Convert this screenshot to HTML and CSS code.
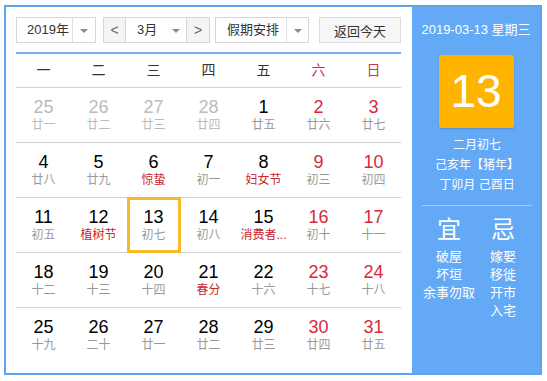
FILE: index.html
```html
<!DOCTYPE html>
<html lang="zh-CN">
<head>
    <meta charset="utf-8">
    <link rel="stylesheet" href="styles.css">
    <title>万年历</title>
</head>
<body>
<div class="calendar">
    <main class="main">
        <div class="toolbar">
            <div class="select sel-year">
                <span class="sel-text">2019年</span>
                <span class="sel-arrow"></span>
            </div>
            <div class="nav">
                <button class="nav-btn">&lt;</button>
                <div class="sel-month">
                    <span class="sel-text">3月</span>
                    <span class="sel-arrow"></span>
                </div>
                <button class="nav-btn nav-next">&gt;</button>
            </div>
            <div class="select sel-holiday">
                <span class="sel-text">假期安排</span>
                <span class="sel-arrow"></span>
            </div>
            <button class="btn-today">返回今天</button>
        </div>

        <div class="weekdays">
            <span>一</span><span>二</span><span>三</span><span>四</span><span>五</span>
            <span class="red">六</span><span class="red">日</span>
        </div>

        <div class="week">
            <div class="day other"><b>25</b><i>廿一</i></div>
            <div class="day other"><b>26</b><i>廿二</i></div>
            <div class="day other"><b>27</b><i>廿三</i></div>
            <div class="day other"><b>28</b><i>廿四</i></div>
            <div class="day"><b>1</b><i>廿五</i></div>
            <div class="day weekend"><b>2</b><i>廿六</i></div>
            <div class="day weekend"><b>3</b><i>廿七</i></div>
        </div>
        <div class="week">
            <div class="day"><b>4</b><i>廿八</i></div>
            <div class="day"><b>5</b><i>廿九</i></div>
            <div class="day"><b>6</b><i class="fest">惊蛰</i></div>
            <div class="day"><b>7</b><i>初一</i></div>
            <div class="day"><b>8</b><i class="fest">妇女节</i></div>
            <div class="day weekend"><b>9</b><i>初三</i></div>
            <div class="day weekend"><b>10</b><i>初四</i></div>
        </div>
        <div class="week">
            <div class="day"><b>11</b><i>初五</i></div>
            <div class="day"><b>12</b><i class="fest">植树节</i></div>
            <div class="day today"><b>13</b><i>初七</i></div>
            <div class="day"><b>14</b><i>初八</i></div>
            <div class="day"><b>15</b><i class="fest" title="消费者权益日">消费者...</i></div>
            <div class="day weekend"><b>16</b><i>初十</i></div>
            <div class="day weekend"><b>17</b><i>十一</i></div>
        </div>
        <div class="week">
            <div class="day"><b>18</b><i>十二</i></div>
            <div class="day"><b>19</b><i>十三</i></div>
            <div class="day"><b>20</b><i>十四</i></div>
            <div class="day"><b>21</b><i class="fest">春分</i></div>
            <div class="day"><b>22</b><i>十六</i></div>
            <div class="day weekend"><b>23</b><i>十七</i></div>
            <div class="day weekend"><b>24</b><i>十八</i></div>
        </div>
        <div class="week">
            <div class="day"><b>25</b><i>十九</i></div>
            <div class="day"><b>26</b><i>二十</i></div>
            <div class="day"><b>27</b><i>廿一</i></div>
            <div class="day"><b>28</b><i>廿二</i></div>
            <div class="day"><b>29</b><i>廿三</i></div>
            <div class="day weekend"><b>30</b><i>廿四</i></div>
            <div class="day weekend"><b>31</b><i>廿五</i></div>
        </div>
    </main>

    <aside class="side">
        <div class="side-date">2019-03-13 星期三</div>
        <div class="side-day">13</div>
        <div class="side-lunar">
            <div>二月初七</div>
            <div>己亥年【猪年】</div>
            <div>丁卯月 己酉日</div>
        </div>
        <div class="side-almanac">
            <div class="alm-col">
                <h2>宜</h2>
                <div>破屋</div>
                <div>坏垣</div>
                <div>余事勿取</div>
            </div>
            <div class="alm-col">
                <h2>忌</h2>
                <div>嫁娶</div>
                <div>移徙</div>
                <div>开市</div>
                <div>入宅</div>
            </div>
        </div>
    </aside>
</div>
</body>
</html>
```

FILE: styles.css
```css
/* @formatter:off */
* { box-sizing: border-box; }
html, body { margin: 0; padding: 0; background: #fff; font-family: "Liberation Sans", "Noto Sans CJK SC", sans-serif; }
.calendar { display: flex; width: 538px; height: 370px; margin: 5px 0 0 4px; border: 2px solid #5fa3ea; }

/* left side: toolbar + month grid */
.main { width: 406px; padding: 10px 11px 0 10px; }
.toolbar { display: flex; height: 26px; margin-bottom: 9px; font-size: 13px; color: #333; }
.toolbar button { font-family: inherit; font-size: 13px; color: #333; padding: 0; margin: 0; cursor: pointer; }
.select { display: flex; height: 26px; border: 1px solid #d6d6d6; background: #fff; }
.sel-text { display: flex; align-items: center; padding-left: 10px; line-height: 24px; border-right: 1px solid #e2e2e2; }
.sel-arrow { position: relative; flex: 1; }
.sel-arrow::after { content: ""; position: absolute; left: 50%; top: 11px; margin-left: -4px; border: 4px solid transparent; border-top: 4px solid #8a8a8a; border-bottom: 0; }
.sel-year { width: 80px; }
.sel-year .sel-text { width: 56px; }
.nav { display: flex; width: 107px; height: 26px; margin-left: 7px; border: 1px solid #d6d6d6; }
.nav-btn { width: 22px; height: 24px; border: 0; border-right: 1px solid #d6d6d6; background: #f4f4f4; color: #666 !important; font-size: 14px !important; }
.nav-btn.nav-next { border-right: 0; border-left: 1px solid #d6d6d6; width: 23px; }
.sel-month { display: flex; flex: 1; background: #fff; }
.sel-month .sel-text { width: 40px; padding-left: 11px; border-right: 0; }
.sel-holiday { width: 94px; margin-left: 5px; }
.sel-holiday .sel-text { width: 71px; padding-left: 11px; }
.btn-today { width: 82px; height: 26px; margin-left: 10px !important; border: 1px solid #dcdcdc; background: #f6f6f6; }

.weekdays { display: grid; grid-template-columns: repeat(7, 55px); height: 36px; border-top: 2px solid #72b0ec; border-bottom: 1px solid #d0d0d0; }
.weekdays span { text-align: center; line-height: 33px; font-size: 14px; color: #333; }
.weekdays .red { color: #d9313c; }

.week { display: grid; grid-template-columns: repeat(7, 55px); height: 55px; border-bottom: 1px solid #d0d0d0; }
.week:last-child { border-bottom: 0; }
.day { position: relative; display: flex; flex-direction: column; justify-content: center; align-items: center; }
.day b { font-weight: normal; font-size: 18px; line-height: 20px; color: #000; }
.day i { display: block; font-style: normal; font-size: 12px; line-height: 17px; color: #999; white-space: nowrap; }
.day.other b { color: #bbb; }
.day.other i { color: #bbb; }
.day.weekend b { color: #d9283a; }
.day i.fest { color: #c9252d; }
.day.today::after { content: ""; position: absolute; top: -1px; bottom: -1px; left: 1px; right: 0; border: 3px solid #f8b92a; }

/* right side: today's detail */
.side { width: 128px; background: #64a9f6; color: #fff; text-align: center; padding-top: 13px; }
.side-date { font-size: 13px; line-height: 20px; }
.side-day { width: 75px; height: 73px; margin: 15px auto 0; background: #ffb400; border-radius: 2px; box-shadow: 0 1px 2px rgba(0, 0, 0, .18); font-size: 46px; line-height: 73px; }
.side-lunar { margin-top: 7px; font-size: 12px; line-height: 20px; padding-bottom: 10px; margin-left: 10px; margin-right: 8px; border-bottom: 1px solid rgba(255, 255, 255, .4); }
.side-almanac { display: grid; grid-template-columns: 54px 54px; justify-content: center; padding-top: 10px; }
.alm-col { font-size: 13px; line-height: 18px; }
.alm-col h2 { margin: 0 0 4px; font-size: 24px; line-height: 28px; font-weight: normal; }
/* @formatter:on */
```
